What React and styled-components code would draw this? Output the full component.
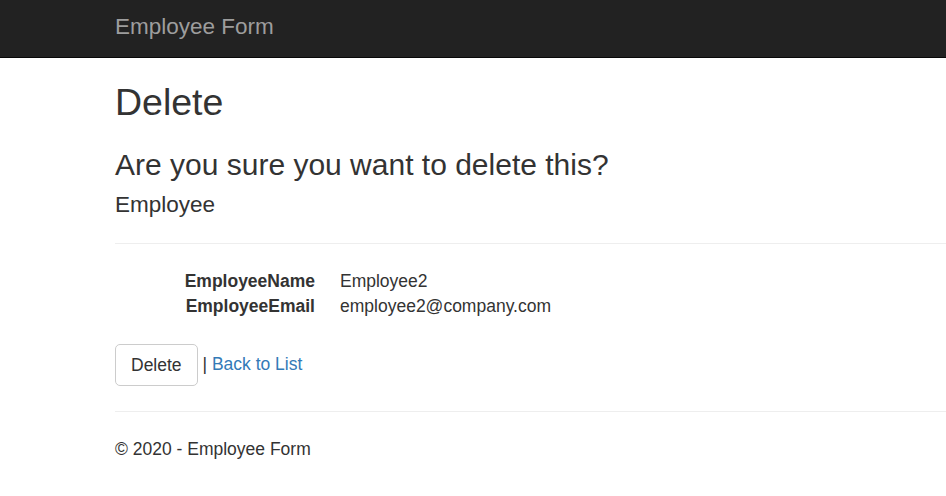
import React from 'react';
import styled, { createGlobalStyle } from 'styled-components';

const GlobalStyle = createGlobalStyle`
  html, body {
    margin: 0;
    padding: 0;
    background: #fff;
  }
  body {
    font-family: "Liberation Sans", Arial, Helvetica, sans-serif;
    font-size: 17.5px;
    line-height: 25px;
    color: #333;
  }
`;

const Navbar = styled.nav`
  height: 57px;
  background: #222;
  border-bottom: 1px solid #080808;
`;

const Brand = styled.a`
  display: inline-block;
  margin-left: 115px;
  padding-top: 14px;
  font-size: 22.5px;
  line-height: 25px;
  color: #9d9d9d;
  text-decoration: none;
`;

const Container = styled.div`
  padding-left: 115px;
  padding-top: 0.1px;
`;

const Title = styled.h2`
  margin: 23.5px 0 12.5px;
  font-size: 37.5px;
  line-height: 1.1;
  font-weight: 500;
`;

const Question = styled.h3`
  margin: 25px 0 12.5px;
  font-size: 30px;
  line-height: 1.1;
  font-weight: 500;
`;

const SubTitle = styled.h4`
  margin: 12.5px 0 12.5px;
  font-size: 22.5px;
  line-height: 1.1;
  font-weight: 500;
`;

const Rule = styled.hr`
  margin: 25px 0;
  border: 0;
  border-top: 1px solid #eee;
`;

const Details = styled.dl`
  display: grid;
  grid-template-columns: 200px 1fr;
  column-gap: 25px;
  margin: 0 0 25px;
  dt {
    font-weight: 700;
    text-align: right;
    white-space: nowrap;
  }
  dd {
    margin: 0;
  }
`;

const Actions = styled.div`
  line-height: 25px;
`;

const Button = styled.button`
  display: inline-block;
  padding: 7.5px 15px;
  font-family: inherit;
  font-size: 17.5px;
  line-height: 25px;
  color: #333;
  background: #fff;
  border: 1px solid #ccc;
  border-radius: 5px;
  cursor: pointer;
  vertical-align: middle;
`;

const Link = styled.a`
  color: #337ab7;
  text-decoration: none;
  &:hover {
    color: #23527c;
    text-decoration: underline;
  }
`;

const Footer = styled.footer`
  p {
    margin: 0 0 12.5px;
  }
`;

const fields = [
  { label: 'EmployeeName', value: 'Employee2' },
  { label: 'EmployeeEmail', value: 'employee2@company.com' },
];

function App() {
  return (
    <>
      <GlobalStyle />
      <Navbar>
        <Brand href="#">Employee Form</Brand>
      </Navbar>
      <Container>
        <Title>Delete</Title>
        <Question>Are you sure you want to delete this?</Question>
        <div>
          <SubTitle>Employee</SubTitle>
          <Rule />
          <Details>
            {fields.map(f => (
              <React.Fragment key={f.label}>
                <dt>{f.label}</dt>
                <dd>{f.value}</dd>
              </React.Fragment>
            ))}
          </Details>
          <form onSubmit={e => e.preventDefault()}>
            <Actions>
              <Button type="submit">Delete</Button> | <Link href="#">Back to List</Link>
            </Actions>
          </form>
        </div>
        <Rule />
        <Footer>
          <p>&copy; 2020 - Employee Form</p>
        </Footer>
      </Container>
    </>
  );
}

export default App;
